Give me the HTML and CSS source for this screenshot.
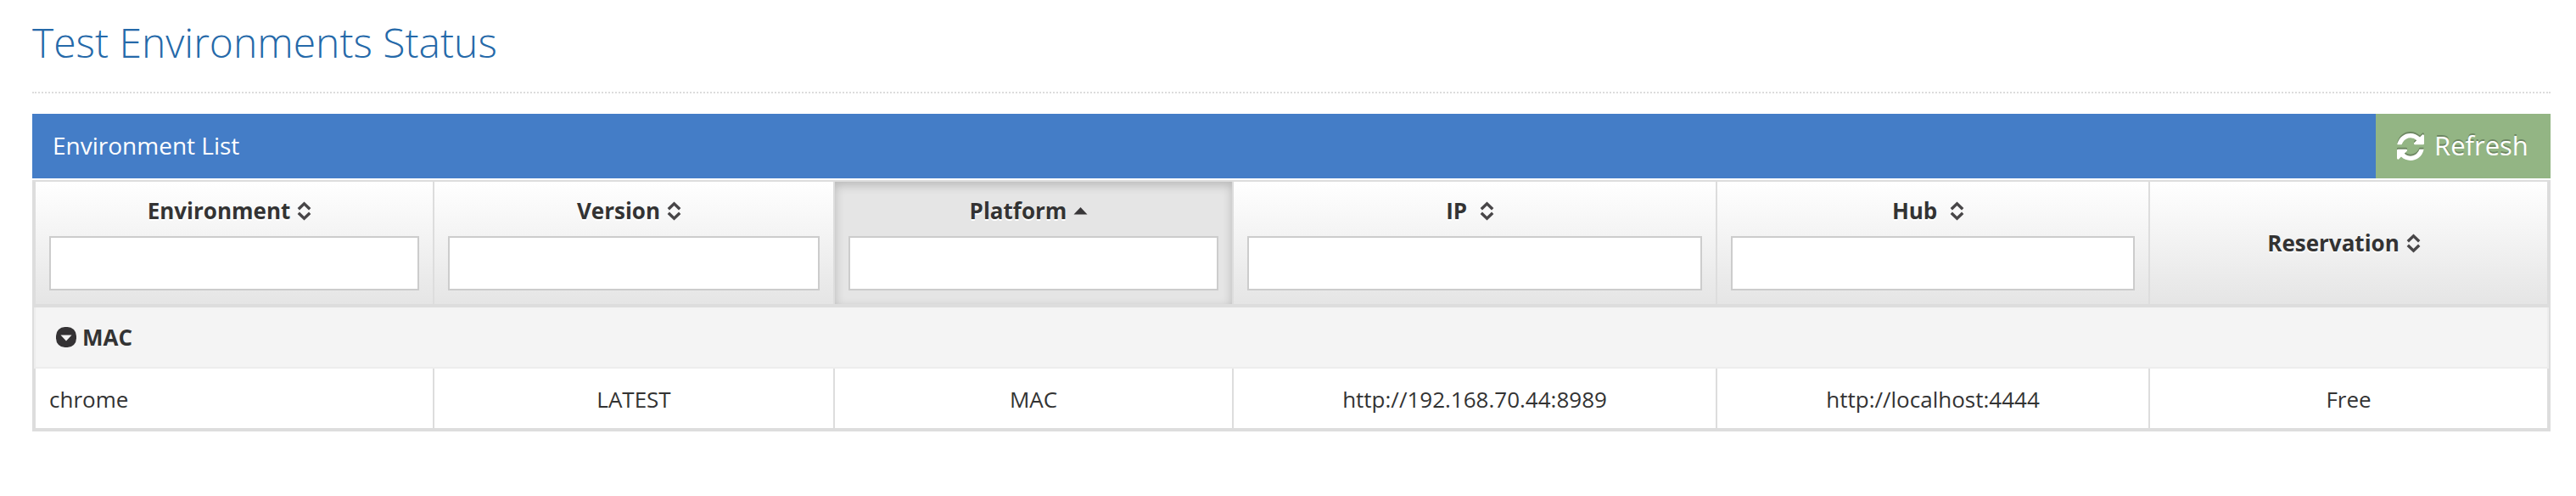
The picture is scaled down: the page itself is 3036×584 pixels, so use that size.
FILE: index.html
```html
<!DOCTYPE html>
<html lang="en">
<head>
<meta charset="utf-8">
<title>Test Environments Status</title>
<link rel="stylesheet" href="styles.css">
</head>
<body>
<svg class="defs" aria-hidden="true">
  <symbol id="sort" viewBox="0 0 32 32"><path d="M9.800 14.200 16.500 7.800l6.700 6.400M9.800 18.800l6.700 6.400 6.700-6.400" fill="none" stroke="#484648" stroke-width="3.400"/></symbol>
  <symbol id="asc" viewBox="0 0 32 32"><path d="M8.500 20.500 16.500 12l8 8.500Z" fill="#383638"/></symbol>
</svg>
<main class="page">
  <h1 class="title">Test Environments Status</h1>
  <section class="panel">
    <header class="bar">
      <span class="bar-title">Environment List</span>
      <button class="refresh" type="button">
        <svg class="refresh-icon" viewBox="0 0 1536 1536"><path fill="#fff" d="M1511 928q0 5-1 7-64 268-268 434.500T764 1536q-146 0-282.500-55T238 1324l-129 129q-19 19-45 19t-45-19-19-45V960q0-26 19-45t45-19h448q26 0 45 19t19 45-19 45l-137 137q71 66 161 102t187 36q134 0 250-65t186-179q11-17 53-117 8-23 30-23h192q13 0 22.500 9.500t9.500 22.500zm25-800v448q0 26-19 45t-45 19h-448q-26 0-45-19t-19-45 19-45l138-138Q969 256 768 256q-134 0-250 65T332 500q-11 17-53 117-8 23-30 23H50q-13 0-22.500-9.500T18 608v-7q65-268 270-434.500T768 0q146 0 284 55.500T1297 212l130-129q19-19 45-19t45 19 19 45z"/></svg>
        <span>Refresh</span>
      </button>
    </header>
    <div class="table">
      <div class="row head">
        <div class="th"><div class="label">Environment<svg class="icon"><use href="#sort"/></svg></div><input class="filter" type="text"></div>
        <div class="th"><div class="label">Version<svg class="icon"><use href="#sort"/></svg></div><input class="filter" type="text"></div>
        <div class="th active"><div class="label">Platform<svg class="icon"><use href="#asc"/></svg></div><input class="filter" type="text"></div>
        <div class="th"><div class="label">IP&nbsp;<svg class="icon"><use href="#sort"/></svg></div><input class="filter" type="text"></div>
        <div class="th"><div class="label">Hub&nbsp;<svg class="icon"><use href="#sort"/></svg></div><input class="filter" type="text"></div>
        <div class="th"><div class="label">Reservation<svg class="icon"><use href="#sort"/></svg></div></div>
      </div>
      <div class="group">
        <svg class="toggle" viewBox="0 0 26 26"><rect x="1" y="1" width="24" height="24" rx="10.500" fill="#343234"/><path d="M6.500 10.500h13L13 17.500Z" fill="#f4f4f4"/></svg>
        <span>MAC</span>
      </div>
      <div class="row data">
        <div class="td first">chrome</div>
        <div class="td">LATEST</div>
        <div class="td">MAC</div>
        <div class="td">http://192.168.70.44:8989</div>
        <div class="td">http://localhost:4444</div>
        <div class="td">Free</div>
      </div>
    </div>
  </section>
</main>
</body>
</html>
```
FILE: styles.css
```css
* { box-sizing: border-box; }
body { margin: 0; background: #fff; color: #333; font: 26px/36px "Open Sans", sans-serif; }
.defs { display: none; }
.page { padding: 0 30px 0 38px; }
.title { margin: 0 0 24px; height: 110px; padding-top: 17px; border-bottom: 2px dotted #dcdcdc; color: #2569a9; font-size: 48px; line-height: 66px; font-weight: 300; }
.bar { display: flex; align-items: center; justify-content: space-between; height: 76px; margin-bottom: 2px; padding-left: 24px; background: #447dc7; color: #fff; font-size: 28px; }
.bar-title { padding-bottom: 2px; }
.refresh { display: flex; align-items: center; gap: 12px; width: 206px; height: 76px; padding: 0 0 2px 25px; border: 0; background: #93b584; color: #fff; font: 31px/44px "Open Sans", sans-serif; text-shadow: 0 -2px 0 rgba(0, 0, 0, .25); }
.refresh-icon { width: 32px; height: 32px; margin-top: 4px; overflow: visible; filter: drop-shadow(0 -2px 0 rgba(0, 0, 0, .25)); }
.table { border: solid #ddd; border-width: 2px 4px 4px; }
.row { display: grid; grid-template-columns: 470px 472px 470px 570px 510px 468px; }
.head { height: 148px; border-bottom: 4px solid #ddd; }
.th { display: flex; flex-direction: column; justify-content: center; gap: 12px; padding: 0 16px; border-right: 2px solid #ddd; background: linear-gradient(#fff, #e5e5e5); }
.th:last-child, .td:last-child { border-right: 0; }
.th.active { background: #e5e5e5; box-shadow: inset 0 4px 12px rgba(0, 0, 0, .2); }
.label { display: flex; align-items: center; justify-content: center; height: 36px; padding-right: 4px; font-weight: 700; text-shadow: 0 2px 0 #fff; }
.icon { width: 32px; height: 32px; }
.filter { width: 100%; height: 64px; border: 2px solid #ccc; background: #fff; }
.group { display: flex; align-items: center; gap: 6px; height: 72px; margin: 0 -2px; padding: 0 0 1px 23px; border: solid #ededed; border-width: 0 2px 2px; background: #f4f4f4; font-weight: 700; }
.toggle { width: 26px; height: 26px; }
.data { height: 70px; }
.td { display: flex; align-items: center; justify-content: center; padding: 2px 16px 0; border-right: 2px solid #ddd; }
.td.first { justify-content: flex-start; }
```
